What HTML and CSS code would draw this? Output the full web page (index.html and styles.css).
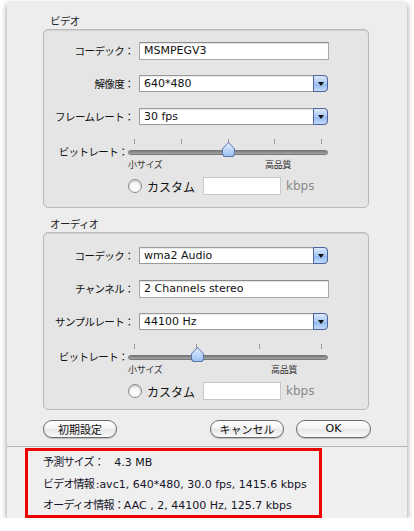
FILE: index.html
```html
<!DOCTYPE html>
<html lang="ja">
<head>
<meta charset="utf-8">
<link rel="stylesheet" href="styles.css">
</head>
<body>
<div class="window">
  <div class="main">
    <div class="group-label jp">ビデオ</div>
    <div class="group video">
      <div class="row">
        <div class="label jp">コーデック：</div>
        <div class="field w190">MSMPEGV3</div>
      </div>
      <div class="row">
        <div class="label jp">解像度：</div>
        <div class="popup"><span class="pv">640*480</span><span class="arrow"></span></div>
      </div>
      <div class="row">
        <div class="label jp">フレームレート：</div>
        <div class="popup"><span class="pv">30 fps</span><span class="arrow"></span></div>
      </div>
      <div class="row slider-row">
        <div class="label jp">ビットレート：</div>
        <div class="slider">
          <div class="ticks five"><i></i><i></i><i></i><i></i><i></i></div>
          <div class="track"><span class="thumb" style="left:93px"></span></div>
          <div class="scale"><span class="jp small">小サイズ</span><span class="jp small hi v">高品質</span></div>
        </div>
      </div>
      <div class="custom">
        <span class="radio"></span><span class="jp ctext">カスタム</span>
        <span class="field kfield"></span><span class="kbps">kbps</span>
      </div>
    </div>

    <div class="group-label jp audio-label">オーディオ</div>
    <div class="group audio">
      <div class="row">
        <div class="label jp">コーデック：</div>
        <div class="popup"><span class="pv">wma2 Audio</span><span class="arrow"></span></div>
      </div>
      <div class="row">
        <div class="label jp">チャンネル：</div>
        <div class="field w190">2 Channels stereo</div>
      </div>
      <div class="row">
        <div class="label jp">サンプルレート：</div>
        <div class="popup"><span class="pv">44100 Hz</span><span class="arrow"></span></div>
      </div>
      <div class="row slider-row">
        <div class="label jp">ビットレート：</div>
        <div class="slider">
          <div class="ticks four"><i></i><i></i><i></i><i></i></div>
          <div class="track"><span class="thumb" style="left:62px"></span></div>
          <div class="scale"><span class="jp small">小サイズ</span><span class="jp small hi a">高品質</span></div>
        </div>
      </div>
      <div class="custom">
        <span class="radio"></span><span class="jp ctext">カスタム</span>
        <span class="field kfield"></span><span class="kbps">kbps</span>
      </div>
    </div>

    <div class="buttons">
      <button class="btn jp b-default">初期設定</button>
      <div class="spacer"></div>
      <button class="btn jp b-cancel">キャンセル</button>
      <button class="btn b-ok">OK</button>
    </div>
  </div>
  <div class="footer">
    <div class="info">
      <div class="line"><span class="jp">予測サイズ：</span><span class="val">&nbsp;&nbsp; 4.3 MB</span></div>
      <div class="line"><span class="jp">ビデオ情報 </span><span class="val">:avc1, 640*480, 30.0 fps, 1415.6 kbps</span></div>
      <div class="line"><span class="jp">オーディオ情報：</span><span class="val">AAC , 2, 44100 Hz, 125.7 kbps</span></div>
    </div>
  </div>
</div>
</body>
</html>
```

FILE: styles.css
```css
* { box-sizing: border-box; }
body {
  margin: 0;
  background: #ffffff;
  font-family: "DejaVu Sans", "Noto Sans CJK JP", sans-serif;
  font-size: 11px;
  color: #111;
}
.jp {
  font-family: "Noto Sans CJK JP", sans-serif;
  font-size: 10.5px;
  letter-spacing: -0.6px;
}
.window {
  margin: 3px 0 0 7px;
  width: 400px;
  height: 515px;
  background: #ededed;
  box-shadow: 0 2px 6px rgba(0,0,0,0.45);
  display: flex;
  flex-direction: column;
  overflow: hidden;
}
.main {
  padding: 10px 38px 0 36px;
}
.group-label {
  height: 16px;
  line-height: 16px;
  padding-left: 7px;
  color: #222;
}
.audio-label {
  margin-top: 8px;
}
.group {
  width: 326px;
  border: 1px solid #b9b9b9;
  border-radius: 5px;
  background: #e5e5e5;
  box-shadow: inset 0 1px 1px rgba(0,0,0,0.08);
}
.video { height: 179px; padding-top: 12px; }
.audio { height: 178px; padding-top: 14px; }
.row {
  display: flex;
  align-items: flex-start;
  height: 18px;
  margin-bottom: 15px;
}
.label {
  width: 90px;
  text-align: right;
  line-height: 18px;
  margin-right: 5px;
  white-space: nowrap;
  color: #111;
}
.field {
  height: 18px;
  background: #fff;
  border: 1px solid #a8a8a8;
  border-top-color: #8c8c8c;
  box-shadow: inset 0 1px 1px rgba(0,0,0,0.12);
  line-height: 16px;
  padding-left: 4px;
}
.w190 { width: 190px; }
.popup {
  display: flex;
  width: 189px;
  height: 17px;
  border: 1px solid #9a9a9a;
  border-radius: 0 4px 4px 0;
  background: #fff;
  box-shadow: inset 0 1px 1px rgba(0,0,0,0.1);
}
.pv {
  flex: 1;
  line-height: 15px;
  padding-left: 4px;
}
.arrow {
  width: 15px;
  margin: -1px -1px -1px 0;
  border: 1px solid #4e64a0;
  border-radius: 0 4px 4px 0;
  background: linear-gradient(#dbe8fb, #a9c9f3 50%, #8cb6ee 51%, #c4dcfa);
  position: relative;
}
.arrow::after {
  content: "";
  position: absolute;
  left: 4px;
  top: 6px;
  border-left: 3px solid transparent;
  border-right: 3px solid transparent;
  border-top: 4px solid #111;
}
.slider-row {
  height: 34px;
  margin-top: -3px;
  margin-bottom: 5px;
}
.slider-row .label { margin-top: 5px; width: 84px; margin-right: 0; }
.slider {
  width: 200px;
  display: flex;
  flex-direction: column;
}
.ticks {
  display: flex;
  justify-content: space-between;
  height: 9px;
  padding: 0 6px;
}
.ticks i {
  width: 1px;
  height: 5px;
  background: #999;
  margin-top: 1px;
}
.track {
  height: 5px;
  margin-top: 3px;
  background: linear-gradient(#7a7a7a, #a8a8a8);
  border: 1px solid #777;
  border-radius: 3px;
  position: relative;
}
.thumb {
  position: absolute;
  top: -9px;
  width: 13px;
  height: 15px;
  background: #5a73a8;
  clip-path: polygon(50% 0, 100% 45%, 100% 85%, 85% 100%, 15% 100%, 0 85%, 0 45%);
}
.thumb::before {
  content: "";
  position: absolute;
  inset: 1px;
  background: linear-gradient(#e2edfc, #9cc1f2);
  clip-path: polygon(50% 0, 100% 45%, 100% 85%, 85% 100%, 15% 100%, 0 85%, 0 45%);
}
.scale {
  position: relative;
  height: 14px;
  margin-top: 3px;
}
.small {
  font-size: 9px;
  letter-spacing: -0.3px;
  color: #333;
  position: absolute;
  left: 0;
  top: 0;
}
.hi.v { left: 137px; }
.hi.a { left: 143px; }
.custom {
  display: flex;
  align-items: center;
  height: 18px;
  margin-left: 84px;
}
.radio {
  width: 14px;
  height: 14px;
  border-radius: 50%;
  border: 1px solid #8a8a8a;
  background: linear-gradient(#f4f4f4, #ffffff);
  box-shadow: inset 0 1px 2px rgba(0,0,0,0.25);
}
.ctext {
  font-size: 12px;
  margin-left: 5px;
  width: 56px;
  letter-spacing: 0;
}
.kfield {
  width: 78px;
  border-color: #c8c8c8;
  box-shadow: none;
}
.kbps {
  margin-left: 5px;
  color: #8a8a8a;
  font-size: 12px;
}
.buttons {
  display: flex;
  margin-top: 10px;
  height: 18px;
  width: 328px;
}
.spacer { flex: 1; }
.btn {
  height: 18px;
  border: 1px solid #6d6d6d;
  border-radius: 9px;
  background: linear-gradient(#ffffff, #f2f2f2 50%, #e6e6e6 51%, #fafafa);
  box-shadow: 0 1px 1px rgba(0,0,0,0.2);
  padding: 0;
  color: #111;
  line-height: 14px;
}
.b-default { width: 74px; letter-spacing: 0; font-size: 11px; }
.b-cancel { width: 74px; letter-spacing: 0; font-size: 11px; }
.b-ok {
  width: 75px;
  margin-left: 12px;
  font-family: "DejaVu Sans", sans-serif;
  font-size: 11px;
}
.footer {
  margin-top: 8px;
  border-top: 1px solid #b4b4b4;
  background: #efefef;
  flex: 1;
  padding: 1px 0 0 18px;
}
.info {
  width: 297px;
  height: 70px;
  border: 3px solid #ee0000;
  padding: 0 0 0 15px;
}
.line {
  height: 21.5px;
  line-height: 21.5px;
  white-space: nowrap;
  color: #141428;
}
.line .jp { font-size: 11px; letter-spacing: -0.8px; }
```
